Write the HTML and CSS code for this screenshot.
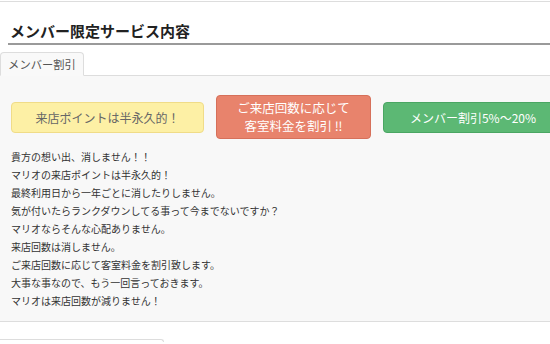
FILE: index.html
```html
<!DOCTYPE html>
<html lang="ja">
<head>
    <meta charset="UTF-8">
    <meta name="viewport" content="width=device-width, initial-scale=1.0">
    <title>メンバー限定サービス内容</title>
    <link rel="stylesheet" href="styles.css">
</head>
<body>
    <div class="prev-section"></div>

    <section class="service">
        <h2 class="service-title">メンバー限定サービス内容</h2>

        <ul class="tabs">
            <li class="tab active">メンバー割引</li>
        </ul>

        <div class="tab-panel">
            <div class="badges">
                <div class="badge badge-yellow">来店ポイントは半永久的！</div>
                <div class="badge badge-red">ご来店回数に応じて<br>客室料金を割引 ‼</div>
                <div class="badge badge-green">メンバー割引5%～20%</div>
            </div>
            <p class="message">
                貴方の想い出、消しません！！<br>
                マリオの来店ポイントは半永久的！<br>
                最終利用日から一年ごとに消したりしません。<br>
                気が付いたらランクダウンしてる事って今までないですか？<br>
                マリオならそんな心配ありません。<br>
                来店回数は消しません。<br>
                ご来店回数に応じて客室料金を割引致します。<br>
                大事な事なので、もう一回言っておきます。<br>
                マリオは来店回数が減りません！
            </p>
        </div>
    </section>

    <div class="next-section"></div>
</body>
</html>
```

FILE: styles.css
```css
* {
    margin: 0;
    padding: 0;
    box-sizing: border-box;
}

body {
    font-family: "Noto Sans CJK JP", "Noto Sans", sans-serif;
    background: #ffffff;
    color: #333333;
    overflow: hidden;
}

.prev-section {
    height: 2px;
    border-bottom: 1px solid #dddddd;
}

.service {
    padding-top: 18px;
}

.service-title {
    margin-left: 8px;
    padding: 0 0 2px 2px;
    font-size: 15px;
    line-height: 21px;
    font-weight: 700;
    color: #222222;
    border-bottom: 2px solid #9a9a9a;
}

.tabs {
    list-style: none;
    display: flex;
    margin-top: 7px;
    border-bottom: 1px solid #dddddd;
}

.tab {
    width: 84px;
    height: 24px;
    margin-bottom: -1px;
    padding-top: 2px;
    font-size: 11.3px;
    line-height: 18px;
    text-align: center;
    color: #555555;
    background: #f9f9f9;
    border: 1px solid #dddddd;
    border-bottom-color: #f9f9f9;
    border-radius: 4px 4px 0 0;
}

.tab-panel {
    background: #f8f8f8;
    border-bottom: 1px solid #dddddd;
    padding: 19px 0 11px 11px;
}

.badges {
    display: flex;
    align-items: center;
    gap: 12px;
}

.badge {
    flex-shrink: 0;
    border-radius: 4px;
    text-align: center;
    font-size: 12px;
}

.badge-yellow {
    width: 193px;
    height: 31px;
    line-height: 29px;
    background: #fdf0a5;
    border: 1px solid #f0dc88;
    color: #666666;
}

.badge-red {
    width: 155px;
    height: 44px;
    padding-top: 3px;
    line-height: 18px;
    font-size: 12.5px;
    background: #e8836c;
    border: 1px solid #d6705a;
    color: #ffffff;
}

.badge-green {
    width: 180px;
    height: 31px;
    line-height: 29px;
    background: #5cb874;
    border: 1px solid #4aa663;
    color: #ffffff;
}

.message {
    margin-top: 9px;
    font-size: 10px;
    line-height: 18px;
    color: #333333;
}

.next-section {
    width: 164px;
    height: 3px;
    margin-top: 17px;
    border: 1px solid #dddddd;
    border-left: none;
    border-bottom: none;
    border-radius: 0 4px 0 0;
}
```
